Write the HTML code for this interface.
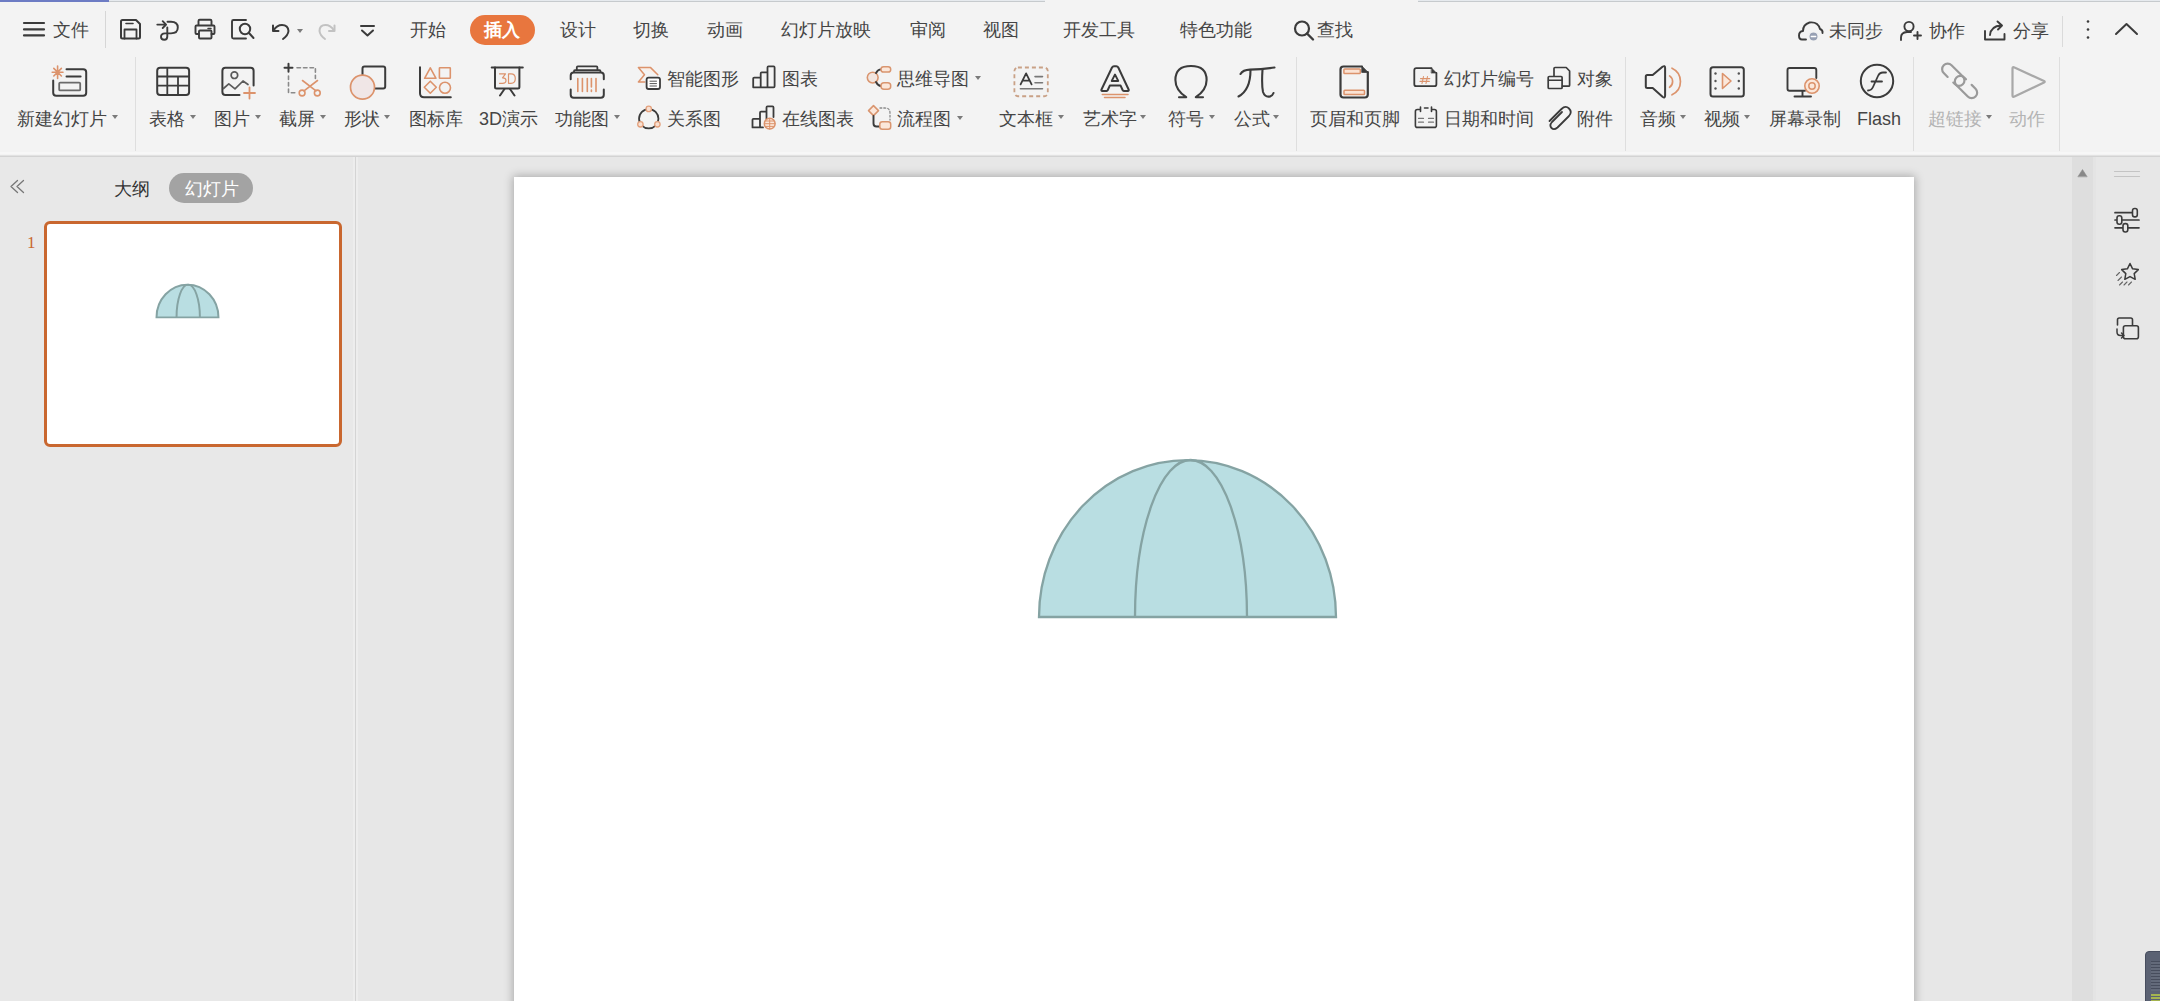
<!DOCTYPE html>
<html><head><meta charset="utf-8">
<style>
*{margin:0;padding:0;box-sizing:border-box}
html,body{width:2160px;height:1001px;overflow:hidden;background:#e7e7e7;font-family:"Liberation Sans",sans-serif;color:#3a3a3a}
.a{position:absolute}
.t{position:absolute;font-size:18px;line-height:18px;white-space:nowrap;color:#454545}
.dd{position:absolute;width:0;height:0;border-left:3.5px solid transparent;border-right:3.5px solid transparent;border-top:4px solid #7a7a7a}
</style></head><body>
<div class="a" style="left:0;top:0;width:2160px;height:155px;background:#f3f3f3"></div>
<div class="a" style="left:0;top:0;width:109px;height:2px;background:#6d7cc4"></div>
<div class="a" style="left:109px;top:0;width:936px;height:1px;background:#e6eaee"></div><div class="a" style="left:109px;top:1px;width:936px;height:1px;background:#c6cacd"></div>
<div class="a" style="left:1418px;top:0;width:742px;height:1px;background:#e6eaee"></div><div class="a" style="left:1418px;top:1px;width:742px;height:1px;background:#c6cacd"></div>
<div class="a" style="left:0;top:152px;width:2160px;height:2px;background:#f7f7f7"></div>
<div class="a" style="left:0;top:155px;width:2160px;height:1px;background:#e2e2e2"></div><div class="a" style="left:0;top:156px;width:2160px;height:1px;background:#d3d3d3"></div>
<div class="a" style="left:0;top:157px;width:355px;height:844px;background:#e8e8e8"></div>
<div class="a" style="left:353px;top:157px;width:2px;height:844px;background:#ededed"></div>
<div class="a" style="left:355px;top:157px;width:1px;height:844px;background:#d4d4d4"></div>
<div class="a" style="left:356px;top:157px;width:2px;height:844px;background:#ededed"></div>
<div class="a" style="left:2072px;top:157px;width:21px;height:844px;background:#dedede"></div>
<div class="a" style="left:2093px;top:157px;width:3px;height:844px;background:#e4e4e4"></div>
<div class="a" style="left:514px;top:177px;width:1400px;height:1050px;background:#fff;box-shadow:0 0 9px 1px rgba(0,0,0,0.28)"></div>
<div class="a" style="left:470px;top:15px;width:65px;height:30px;border-radius:15px;background:#e8763e"></div>
<div class="a" style="left:169px;top:173px;width:84px;height:30px;border-radius:15px;background:#a3a3a3"></div>
<div class="a" style="left:44px;top:221px;width:298px;height:226px;border:3px solid #c9672f;border-radius:6px;background:#fff"></div>
<div class="a" style="left:27px;top:234px;font-family:'Liberation Serif',serif;font-size:17px;line-height:17px;color:#c9672f">1</div>
<div class="a" style="left:2145px;top:951px;width:20px;height:60px;background:#5b6273;border-radius:4px 0 0 0;border:1px solid #474d5e"></div>
<div class="a" style="left:2151px;top:961px;width:9px;height:30px;background:repeating-linear-gradient(#474d5d 0 1.2px,#636a7a 1.2px 3px)"></div>
<div class="a" style="left:2151px;top:994px;width:9px;height:7px;background:repeating-linear-gradient(#a4b450 0 2px,#5b6273 2px 3px)"></div>
<svg class="a" style="left:0;top:0" width="2160" height="1001" viewBox="0 0 2160 1001">
<path d="M24,23H44M24,29.4H44M24,35.4H44" stroke="#3b3b3b" stroke-width="2.2" fill="none" stroke-linecap="round" stroke-linejoin="round" />
<line x1="105.5" y1="11" x2="105.5" y2="48" stroke="#d6d6d6" stroke-width="1"/>
<path d="M121,21.5Q121,20 122.5,20H136L140,24V37Q140,38.5 138.5,38.5H122.5Q121,38.5 121,37Z" stroke="#3b3b3b" stroke-width="2" fill="none" stroke-linecap="round" stroke-linejoin="round" />
<path d="M124.5,38.5V29.5H136.5V38.5" stroke="#3b3b3b" stroke-width="1.8" fill="none" stroke-linecap="round" stroke-linejoin="round" />
<path d="M126,23.5H133" stroke="#3b3b3b" stroke-width="1.6" fill="none" stroke-linecap="round" stroke-linejoin="round" />
<path d="M157.3,24.6H166M162.7,21.2L166.1,24.6L162.7,28" stroke="#3b3b3b" stroke-width="1.9" fill="none" stroke-linecap="round" stroke-linejoin="round" />
<path d="M167.5,21.8H171Q177.8,21.8 177.8,27.6Q177.8,33.4 171,33.4H165Q161,33.6 161,36.8Q161,39.8 164.3,39.8Q167.3,39.8 167.3,36.5V27.5" stroke="#3b3b3b" stroke-width="1.9" fill="none" stroke-linecap="round" stroke-linejoin="round" />
<path d="M198.5,25V21Q198.5,19.8 199.7,19.8H210.3Q211.5,19.8 211.5,21V25" stroke="#3b3b3b" stroke-width="1.9" fill="none" stroke-linecap="round" stroke-linejoin="round" />
<path d="M198.5,34H196.5Q195.5,34 195.5,33V26.5Q195.5,25.5 196.5,25.5H213.5Q214.5,25.5 214.5,26.5V33Q214.5,34 213.5,34H211.5" stroke="#3b3b3b" stroke-width="1.9" fill="none" stroke-linecap="round" stroke-linejoin="round" />
<rect x="199" y="30.5" width="12.5" height="8" rx="1" stroke="#3b3b3b" stroke-width="1.9" fill="none" />
<path d="M208,28.5H211" stroke="#3b3b3b" stroke-width="1.5" fill="none" stroke-linecap="round" stroke-linejoin="round" />
<path d="M246,20H233.5Q232,20 232,21.5V37Q232,38.5 233.5,38.5H246" stroke="#3b3b3b" stroke-width="1.9" fill="none" stroke-linecap="round" stroke-linejoin="round" />
<circle cx="245" cy="29" r="5.2" stroke="#3b3b3b" stroke-width="2" fill="none"/>
<path d="M249,33L253.5,38" stroke="#3b3b3b" stroke-width="2" fill="none" stroke-linecap="round" stroke-linejoin="round" />
<path d="M273,25.5V31H278.5" stroke="#3b3b3b" stroke-width="2" fill="none" stroke-linecap="round" stroke-linejoin="round" />
<path d="M273.5,30.5Q277,25 282,25Q288,25 288.5,31Q288,35.5 283,39" stroke="#3b3b3b" stroke-width="2" fill="none" stroke-linecap="round" stroke-linejoin="round" />
<path d="M334.5,25.5V31H329" stroke="#c2c2c2" stroke-width="2" fill="none" stroke-linecap="round" stroke-linejoin="round" />
<path d="M334,30.5Q330.5,25 325.5,25Q319.5,25 319.5,31Q320,35.5 325,39" stroke="#c2c2c2" stroke-width="2" fill="none" stroke-linecap="round" stroke-linejoin="round" />
<path d="M361,26H374M362,30.5L367.5,35.5L373,30.5" stroke="#3b3b3b" stroke-width="2" fill="none" stroke-linecap="round" stroke-linejoin="round" />
<circle cx="1302" cy="28.5" r="7" stroke="#3b3b3b" stroke-width="2.2" fill="none"/>
<path d="M1307,33.5L1313,39.5" stroke="#3b3b3b" stroke-width="2.4" fill="none" stroke-linecap="round" stroke-linejoin="round" />
<path d="M1806,39.5H1802Q1799,39.5 1799,35.5Q1799,31.5 1803,31Q1803,24.5 1809.5,22.5Q1818,21.5 1820,29Q1823,30 1822.5,33" stroke="#3b3b3b" stroke-width="1.9" fill="none" stroke-linecap="round" stroke-linejoin="round" />
<circle cx="1813.5" cy="36.5" r="4.6" stroke="#f3f3f3" stroke-width="1.2" fill="#97a0b3"/>
<path d="M1811.3,36.5H1815.7" stroke="#fff" stroke-width="1.4" fill="none" stroke-linecap="round" stroke-linejoin="round" />
<circle cx="1909" cy="26.5" r="4.6" stroke="#3b3b3b" stroke-width="1.9" fill="none"/>
<path d="M1901,40V37.5Q1901,32.5 1907,32H1911" stroke="#3b3b3b" stroke-width="1.9" fill="none" stroke-linecap="round" stroke-linejoin="round" />
<path d="M1917.5,32V39M1914,35.5H1921" stroke="#3b3b3b" stroke-width="1.9" fill="none" stroke-linecap="round" stroke-linejoin="round" />
<path d="M1985,31V39.5H2004.5V34" stroke="#3b3b3b" stroke-width="1.9" fill="none" stroke-linecap="round" stroke-linejoin="round" />
<path d="M1990,35Q1991,26 2001,25.5M1997.5,21.5L2002,25.5L1998,29.5" stroke="#3b3b3b" stroke-width="1.9" fill="none" stroke-linecap="round" stroke-linejoin="round" />
<line x1="2062.5" y1="16" x2="2062.5" y2="47" stroke="#dadada" stroke-width="1"/>
<circle cx="2088" cy="21.5" r="1.3" stroke="#3b3b3b" stroke-width="0" fill="#3b3b3b"/>
<circle cx="2088" cy="29.5" r="1.3" stroke="#3b3b3b" stroke-width="0" fill="#3b3b3b"/>
<circle cx="2088" cy="37.5" r="1.3" stroke="#3b3b3b" stroke-width="0" fill="#3b3b3b"/>
<path d="M2116,34L2126.5,24L2137,34" stroke="#3b3b3b" stroke-width="2" fill="none" stroke-linecap="round" stroke-linejoin="round" />
<line x1="135.5" y1="57" x2="135.5" y2="151" stroke="#dedede" stroke-width="1"/>
<line x1="1296.5" y1="57" x2="1296.5" y2="151" stroke="#dedede" stroke-width="1"/>
<line x1="1625.5" y1="57" x2="1625.5" y2="151" stroke="#dedede" stroke-width="1"/>
<line x1="1913.5" y1="57" x2="1913.5" y2="151" stroke="#dedede" stroke-width="1"/>
<line x1="2059.5" y1="57" x2="2059.5" y2="151" stroke="#dedede" stroke-width="1"/>
<path d="M66.5,69.2H83.2Q86.2,69.2 86.2,72.2V92.8Q86.2,95.8 83.2,95.8H56.2Q53.2,95.8 53.2,92.8V80.5" stroke="#3b3b3b" stroke-width="2" fill="none" stroke-linecap="round" stroke-linejoin="round" />
<path d="M66.5,76.6H80.6" stroke="#3b3b3b" stroke-width="2" fill="none" stroke-linecap="round" stroke-linejoin="round" />
<rect x="59.2" y="82.6" width="21" height="7.8" rx="1" stroke="#6a6a6a" stroke-width="1.8" fill="none" />
<path d="M57.6,66V78.4M52.2,72.2H63M53.8,68.4L61.4,76M61.4,68.4L53.8,76" stroke="#dc936c" stroke-width="1.6" fill="none" stroke-linecap="round" stroke-linejoin="round" />
<rect x="157.2" y="67.7" width="31.9" height="27.2" rx="3" stroke="#3b3b3b" stroke-width="2" fill="none" />
<path d="M158,76.5H188.5M158,85.6H188.5M167.3,68.5V94.5M178,76.5V94.5" stroke="#3b3b3b" stroke-width="1.8" fill="none" stroke-linecap="round" stroke-linejoin="round" />
<path d="M239.5,94.9H225.4Q222.4,94.9 222.4,91.9V70.7Q222.4,67.7 225.4,67.7H250.6Q253.6,67.7 253.6,70.7V85.6" stroke="#3b3b3b" stroke-width="2" fill="none" stroke-linecap="round" stroke-linejoin="round" />
<circle cx="234.4" cy="75.2" r="3.3" stroke="#5a5a5a" stroke-width="1.7" fill="none"/>
<path d="M223.5,88.5L228.8,83.8L235,88.8L243,81L248,84.5" stroke="#5a5a5a" stroke-width="1.7" fill="none" stroke-linecap="round" stroke-linejoin="round" />
<path d="M249.5,87.5V98.5M244,93H255" stroke="#dc936c" stroke-width="1.8" fill="none" stroke-linecap="round" stroke-linejoin="round" />
<path d="M288.5,63.7V71.7M284.5,67.7H292.5" stroke="#3b3b3b" stroke-width="2" fill="none" stroke-linecap="round" stroke-linejoin="round" />
<path d="M297,67.7H315.4V78.5M288.5,76V92.7H297" stroke="#8a8a8a" stroke-width="1.6" fill="none" stroke-linecap="round" stroke-linejoin="round" stroke-dasharray="3.5,3"/>
<path d="M302.5,80.5L316,90.8M317.5,80.5L304,90.8" stroke="#dc936c" stroke-width="1.6" fill="none" stroke-linecap="round" stroke-linejoin="round" />
<circle cx="302.1" cy="93" r="2.9" stroke="#dc936c" stroke-width="1.6" fill="none"/>
<circle cx="317.3" cy="93" r="2.9" stroke="#dc936c" stroke-width="1.6" fill="none"/>
<path d="M362.5,75V68.4Q362.5,66.4 364.5,66.4H383.2Q385.2,66.4 385.2,68.4V86.5Q385.2,88.5 383.2,88.5H374.5" stroke="#3b3b3b" stroke-width="2" fill="none" stroke-linecap="round" stroke-linejoin="round" />
<circle cx="362.5" cy="87.2" r="12" stroke="#dc936c" stroke-width="1.7" fill="#f0e6e6"/>
<path d="M420,67.2V93.2Q420,97.2 424,97.2H450.8" stroke="#3b3b3b" stroke-width="2" fill="none" stroke-linecap="round" stroke-linejoin="round" />
<path d="M430.3,67.8L424.6,78.3H436Z" stroke="#dc936c" stroke-width="1.6" fill="none" stroke-linecap="round" stroke-linejoin="round" />
<rect x="439.4" y="67.7" width="10.9" height="10.6" rx="0.5" stroke="#dc936c" stroke-width="1.6" fill="none" />
<path d="M430.3,81.2L436.3,87.2L430.3,93.2L424.3,87.2Z" stroke="#dc936c" stroke-width="1.6" fill="none" stroke-linecap="round" stroke-linejoin="round" />
<circle cx="445" cy="87.8" r="5.5" stroke="#dc936c" stroke-width="1.6" fill="none"/>
<path d="M491.7,67.5H522.8" stroke="#3b3b3b" stroke-width="2" fill="none" stroke-linecap="round" stroke-linejoin="round" />
<path d="M495,67.5V87.1Q495,88.6 496.5,88.6H517.9Q519.4,88.6 519.4,87.1V67.5" stroke="#3b3b3b" stroke-width="2" fill="none" stroke-linecap="round" stroke-linejoin="round" />
<path d="M504.5,89L500,95.5M510,89L514.5,95.5" stroke="#3b3b3b" stroke-width="2" fill="none" stroke-linecap="round" stroke-linejoin="round" />
<path d="M499.5,73.8H505.5L502.5,77.8Q506,77.8 506,80.5Q506,83.3 502.5,83.3H499.5M508.5,73.8H511Q515.3,73.8 515.3,78.5Q515.3,83.3 511,83.3H508.5Z" stroke="#dc936c" stroke-width="1.2" fill="none" stroke-linecap="round" stroke-linejoin="round" />
<path d="M570.7,79.3V75.5Q570.7,72.5 573.7,72.5H600.8Q603.8,72.5 603.8,75.5V79.3M570.7,89.5V94.7Q570.7,97.7 573.7,97.7H600.8Q603.8,97.7 603.8,94.7V89.5" stroke="#3b3b3b" stroke-width="2" fill="none" stroke-linecap="round" stroke-linejoin="round" />
<path d="M574,72V71.2Q574,70.2 575,70.2H599.5Q600.5,70.2 600.5,71.2V72" stroke="#3b3b3b" stroke-width="1.8" fill="none" stroke-linecap="round" stroke-linejoin="round" />
<path d="M576.8,69.5V67.4Q576.8,66.4 577.8,66.4H596.4Q597.4,66.4 597.4,67.4V69.5" stroke="#3b3b3b" stroke-width="1.8" fill="none" stroke-linecap="round" stroke-linejoin="round" />
<path d="M577.8,78.5V91.5M582.4,78.5V91.5M587.3,78.5V91.5M591.4,78.5V87M591.4,90V91.5M596,78.5V91.5" stroke="#dc936c" stroke-width="1.6" fill="none" stroke-linecap="round" stroke-linejoin="round" />
<path d="M638.4,67.6H650.6L657.8,74.8M644.8,82.1H638.4L644.5,74.8L638.4,67.6" stroke="#dc936c" stroke-width="1.5" fill="#fbeee6" stroke-linecap="round" stroke-linejoin="round" />
<rect x="646.6" y="77.6" width="13.4" height="11.4" rx="2" stroke="#3b3b3b" stroke-width="1.8" fill="#fff" />
<path d="M650,81.2H656.5M650,83.6H656.5M650,86H656.5" stroke="#555" stroke-width="1" fill="none" stroke-linecap="round" stroke-linejoin="round" />
<path d="M753.2,87.3V78.6Q753.2,77.6 754.2,77.6H760.7V87.3ZM760.7,87.3V73.4Q760.7,72.4 761.7,72.4H767.5V87.3M767.5,87.3V67.4Q767.5,66.4 768.5,66.4H773.6Q774.6,66.4 774.6,67.4V86.3Q774.6,87.3 773.6,87.3H754.2" stroke="#3b3b3b" stroke-width="1.8" fill="none" stroke-linecap="round" stroke-linejoin="round" />
<circle cx="648.75" cy="118.75" r="9.7" stroke="#3b3b3b" stroke-width="1.8" fill="none"/>
<circle cx="648.75" cy="108.9" r="2.7" stroke="#e3a07c" stroke-width="1.3" fill="#f8e0d2"/>
<circle cx="640.4" cy="124.3" r="2.7" stroke="#e3a07c" stroke-width="1.3" fill="#f8e0d2"/>
<circle cx="657.4" cy="124.3" r="2.7" stroke="#e3a07c" stroke-width="1.3" fill="#f8e0d2"/>
<path d="M752.5,127.4V119.8Q752.5,118.8 753.5,118.8H760V127.4ZM760,127.4V112.7Q760,111.7 761,111.7H766.5V119M766.5,119V107.4Q766.5,106.4 767.5,106.4H772.5Q773.5,106.4 773.5,107.4V117M763,127.4H753.5" stroke="#3b3b3b" stroke-width="1.8" fill="none" stroke-linecap="round" stroke-linejoin="round" />
<circle cx="769.7" cy="123.7" r="5.4" stroke="#dc936c" stroke-width="1.5" fill="#fbe7da"/>
<path d="M764.5,123.7H775M769.7,118.5V129M766,121H773.5M766,126.4H773.5" stroke="#dc936c" stroke-width="1" fill="none" stroke-linecap="round" stroke-linejoin="round" />
<circle cx="872.7" cy="77.6" r="5.4" stroke="#d9956f" stroke-width="1.6" fill="#f2e6e0"/>
<path d="M876,73Q878,69.5 881,69.4M876,82Q878,85.8 881,86" stroke="#3b3b3b" stroke-width="1.9" fill="none" stroke-linecap="round" stroke-linejoin="round" />
<rect x="881" y="66.7" width="9.7" height="5.4" rx="2.6" stroke="#d9956f" stroke-width="1.5" fill="#fbe7da" />
<rect x="881" y="82.8" width="9.7" height="6.4" rx="3" stroke="#d9956f" stroke-width="1.5" fill="#fbe7da" />
<path d="M873.5,105.6L878.5,110.6L873.5,115.6L868.5,110.6Z" stroke="#d9956f" stroke-width="1.5" fill="#fbe7da" stroke-linecap="round" stroke-linejoin="round" />
<path d="M873.5,116V123.5Q873.5,126.5 876.5,126.5H879.8" stroke="#3b3b3b" stroke-width="1.9" fill="none" stroke-linecap="round" stroke-linejoin="round" />
<path d="M880,108H885Q890,108 890,113V120" stroke="#8a8a8a" stroke-width="1.3" fill="none" stroke-linecap="round" stroke-linejoin="round" stroke-dasharray="1.8,2"/>
<rect x="879.8" y="121.8" width="10.9" height="7.5" rx="2.5" stroke="#d9956f" stroke-width="1.5" fill="#fbe7da" />
<rect x="1014.4" y="67.5" width="33.4" height="28.75" rx="3.5" stroke="#c9a186" stroke-width="1.8" fill="none" stroke-dasharray="4,3"/>
<path d="M1020.6,84.4L1026.1,73.4L1031.6,84.4M1022.5,80.6H1029.7" stroke="#3b3b3b" stroke-width="1.8" fill="none" stroke-linecap="round" stroke-linejoin="round" />
<path d="M1035,76.6H1042.5M1035,82.8H1042.5M1020.4,88.75H1042.5" stroke="#777" stroke-width="1.6" fill="none" stroke-linecap="round" stroke-linejoin="round" />
<path d="M1101.5,89.5L1112,67.5Q1112.7,66.2 1114,66.2H1116.3Q1117.6,66.2 1118.3,67.5L1128.6,89.5Q1129.2,90.9 1127.8,90.9H1123.8Q1123,90.9 1122.6,90L1120.6,85.6H1109.8L1107.8,90Q1107.4,90.9 1106.6,90.9H1102.3Q1100.9,90.9 1101.5,89.5Z" stroke="#3b3b3b" stroke-width="2" fill="none" stroke-linecap="round" stroke-linejoin="round" />
<path d="M1111.7,81L1115,74.5L1118.3,81Z" stroke="#3b3b3b" stroke-width="1.8" fill="none" stroke-linecap="round" stroke-linejoin="round" />
<path d="M1102.3,94.6H1128M1104.5,97.6H1125" stroke="#dc936c" stroke-width="1.5" fill="none" stroke-linecap="round" stroke-linejoin="round" />
<path d="M1179,97.2H1186.2Q1175.4,90 1175.4,80Q1175.4,66 1191,66Q1206.6,66 1206.6,80Q1206.6,90 1195.8,97.2H1203" stroke="#3b3b3b" stroke-width="2.1" fill="none" stroke-linecap="round" stroke-linejoin="round" />
<path d="M1240.5,74Q1243,69.8 1250,69.6Q1262,69.2 1274.5,67.5" stroke="#3b3b3b" stroke-width="2.1" fill="none" stroke-linecap="round" stroke-linejoin="round" />
<path d="M1250.5,70Q1250.5,90 1238.5,96.5" stroke="#3b3b3b" stroke-width="2.1" fill="none" stroke-linecap="round" stroke-linejoin="round" />
<path d="M1262.5,69.6Q1261.5,85 1263,92Q1265,97.5 1270,96.5Q1272.5,95.8 1273.5,93" stroke="#3b3b3b" stroke-width="2.1" fill="none" stroke-linecap="round" stroke-linejoin="round" />
<path d="M1362,66.5H1343.5Q1340.5,66.5 1340.5,69.5V94.5Q1340.5,97.5 1343.5,97.5H1364.8Q1367.8,97.5 1367.8,94.5V72.2" stroke="#3b3b3b" stroke-width="2.2" fill="none" stroke-linecap="round" stroke-linejoin="round" />
<path d="M1362,66.2L1368.2,72.4H1362Z" stroke="#3b3b3b" stroke-width="0.8" fill="#3b3b3b" stroke-linecap="round" stroke-linejoin="round" />
<rect x="1343.9" y="69" width="16.4" height="4.5" rx="0.8" stroke="#dc936c" stroke-width="1.5" fill="#fbe3d4" />
<rect x="1344" y="90.3" width="20.5" height="4.2" rx="0.8" stroke="#dc936c" stroke-width="1.5" fill="#fbe3d4" />
<path d="M1431.5,68.2H1416.3Q1414.3,68.2 1414.3,70.2V84.2Q1414.3,86.2 1416.3,86.2H1434.4Q1436.4,86.2 1436.4,84.2V73" stroke="#3b3b3b" stroke-width="1.8" fill="none" stroke-linecap="round" stroke-linejoin="round" />
<path d="M1431.5,68L1436.6,73.1H1431.5Z" stroke="#3b3b3b" stroke-width="0.6" fill="#3b3b3b" stroke-linecap="round" stroke-linejoin="round" />
<path d="M1423.5,76.5L1422,83.5M1427.5,76.5L1426,83.5M1420.5,78.6H1429.8M1420,81.4H1429.3" stroke="#dc936c" stroke-width="1.1" fill="none" stroke-linecap="round" stroke-linejoin="round" />
<path d="M1420,109.5H1417.4Q1415.4,109.5 1415.4,111.5V125.4Q1415.4,127.4 1417.4,127.4H1434.4Q1436.4,127.4 1436.4,125.4V111.5Q1436.4,109.5 1434.4,109.5H1432M1424.5,108H1428" stroke="#3b3b3b" stroke-width="1.6" fill="none" stroke-linecap="round" stroke-linejoin="round" />
<path d="M1420.5,107V111.5M1431.5,107V111.5" stroke="#3b3b3b" stroke-width="1.6" fill="none" stroke-linecap="round" stroke-linejoin="round" />
<path d="M1418.5,118.4H1423.5M1428.5,118.4H1433.5M1418.5,122.2H1423.5M1428.5,122.2H1433.5" stroke="#777" stroke-width="1.2" fill="none" stroke-linecap="round" stroke-linejoin="round" />
<path d="M1554,76V68.5Q1554,67.5 1555,67.5H1566.2L1569.6,71V85.2Q1569.6,86.2 1568.6,86.2H1562.5" stroke="#3b3b3b" stroke-width="1.7" fill="none" stroke-linecap="round" stroke-linejoin="round" />
<rect x="1548.2" y="76.5" width="13.9" height="12" rx="1" stroke="#3b3b3b" stroke-width="1.7" fill="none" />
<path d="M1548.5,80.2H1562" stroke="#3b3b3b" stroke-width="1.4" fill="none" stroke-linecap="round" stroke-linejoin="round" />
<path d="M1562,112L1552,122Q1549,125.5 1551.5,128Q1554,130.5 1557.5,127.5L1569,116Q1572.5,112 1569,108.5Q1565.5,105 1561.5,109L1549.5,121" stroke="#3b3b3b" stroke-width="1.8" fill="none" stroke-linecap="round" stroke-linejoin="round" />
<path d="M1645.8,76.5Q1645.8,75 1647.3,75H1652.7L1662.5,66.8Q1665.1,65 1665.1,68V95.6Q1665.1,98.6 1662.5,96.8L1652.7,88.1H1647.3Q1645.8,88.1 1645.8,86.6Z" stroke="#3b3b3b" stroke-width="2" fill="none" stroke-linecap="round" stroke-linejoin="round" />
<path d="M1669.6,75.9A6.9,6.9 0 0 1 1669.6,87.3M1672,68.2A14.7,14.7 0 0 1 1672,94.8" stroke="#dc936c" stroke-width="1.7" fill="none" stroke-linecap="round" stroke-linejoin="round" />
<rect x="1710.5" y="67.3" width="33.3" height="29.2" rx="2.5" stroke="#3b3b3b" stroke-width="2" fill="none" />
<circle cx="1715.5" cy="73.5" r="1.2" stroke="#3b3b3b" stroke-width="0" fill="#555"/>
<circle cx="1738.8" cy="73.5" r="1.2" stroke="#3b3b3b" stroke-width="0" fill="#555"/>
<circle cx="1715.5" cy="81" r="1.2" stroke="#3b3b3b" stroke-width="0" fill="#555"/>
<circle cx="1738.8" cy="81" r="1.2" stroke="#3b3b3b" stroke-width="0" fill="#555"/>
<circle cx="1715.5" cy="88.5" r="1.2" stroke="#3b3b3b" stroke-width="0" fill="#555"/>
<circle cx="1738.8" cy="88.5" r="1.2" stroke="#3b3b3b" stroke-width="0" fill="#555"/>
<path d="M1722.5,73.5L1731,81L1722.5,88.5Z" stroke="#dc936c" stroke-width="1.6" fill="#fbe7da" stroke-linecap="round" stroke-linejoin="round" />
<path d="M1805,90.8H1789.5Q1787.5,90.8 1787.5,88.8V70Q1787.5,68 1789.5,68H1814.3Q1816.3,68 1816.3,70V78" stroke="#3b3b3b" stroke-width="1.9" fill="none" stroke-linecap="round" stroke-linejoin="round" />
<path d="M1802.5,91V96.2M1794.5,96.5H1811" stroke="#3b3b3b" stroke-width="1.9" fill="none" stroke-linecap="round" stroke-linejoin="round" />
<circle cx="1812" cy="86" r="7.2" stroke="#dc936c" stroke-width="1.6" fill="#fbe7da"/>
<circle cx="1812" cy="86" r="3.2" stroke="#dc936c" stroke-width="1.5" fill="none"/>
<circle cx="1877" cy="81" r="16.2" stroke="#3b3b3b" stroke-width="2" fill="none"/>
<path d="M1868,90.5Q1871.5,90.5 1873,87L1878,76Q1879.5,72.5 1883,72.5H1886M1871.5,81.5H1882" stroke="#3b3b3b" stroke-width="1.8" fill="none" stroke-linecap="round" stroke-linejoin="round" />
<g transform="translate(1953.3,74.8) rotate(45)"><path d="M-2.5,5.5H-8A5.5,5.5 0 0 1 -8,-5.5H8A5.5,5.5 0 0 1 8,5.5H5.5" stroke="#9a9a9a" stroke-width="2.2" fill="none" stroke-linecap="round"/></g>
<g transform="translate(1966,87) rotate(45)"><path d="M2.5,-5.5H8A5.5,5.5 0 0 1 8,5.5H-8A5.5,5.5 0 0 1 -8,-5.5H-5.5" stroke="#9a9a9a" stroke-width="2.2" fill="none" stroke-linecap="round"/></g>
<path d="M2014.5,67.5L2044,81Q2045.5,81.8 2044,82.6L2014.5,96.5Q2012.5,97.5 2012.5,95.5V68.5Q2012.5,66.5 2014.5,67.5Z" stroke="#a8a8a8" stroke-width="2.2" fill="none" stroke-linecap="round" stroke-linejoin="round" />
<path d="M17.5,180.5L11,186.5L17.5,192.5M23.5,180.5L17,186.5L23.5,192.5" stroke="#777" stroke-width="1.3" fill="none" stroke-linecap="round" stroke-linejoin="round" />
<path d="M2078,176.5L2082.5,169.5L2087,176.5Z" stroke="#888" stroke-width="0.5" fill="#888" stroke-linecap="round" stroke-linejoin="round" />
<path d="M2114.5,171.5H2139.5M2114.5,176.5H2139.5" stroke="#c4c4c4" stroke-width="1.2" fill="none" stroke-linecap="round" stroke-linejoin="round" />
<path d="M2115,212.7H2134M2115,220H2139M2115,227.8H2139" stroke="#3b3b3b" stroke-width="1.7" fill="none" stroke-linecap="round" stroke-linejoin="round" />
<rect x="2132.5" y="208.5" width="4.8" height="8.4" rx="2.2" stroke="#3b3b3b" stroke-width="1.6" fill="#e8e8e8" />
<rect x="2117" y="215.8" width="4.8" height="8.4" rx="2.2" stroke="#3b3b3b" stroke-width="1.6" fill="#e8e8e8" />
<rect x="2123" y="223.6" width="4.8" height="8.4" rx="2.2" stroke="#3b3b3b" stroke-width="1.6" fill="#e8e8e8" />
<path d="M2130,263.5L2132.6,268.8L2138.3,269.6L2134.2,273.6L2135.2,279.3L2130,276.6L2124.8,279.3L2125.8,273.6L2121.7,269.6L2127.4,268.8Z" stroke="#3b3b3b" stroke-width="1.5" fill="none" stroke-linecap="round" stroke-linejoin="round" />
<path d="M2116.5,275.5L2119.5,272.5M2118,280.5L2121.5,277M2119.5,285L2122.5,282M2124,285L2127,282M2128.5,285L2131.5,282" stroke="#666" stroke-width="1.1" fill="none" stroke-linecap="round" stroke-linejoin="round" />
<path d="M2117.5,325V319.8Q2117.5,318 2119.3,318H2130.7Q2132.5,318 2132.5,319.8V325.7" stroke="#3b3b3b" stroke-width="1.6" fill="none" stroke-linecap="round" stroke-linejoin="round" />
<rect x="2123.4" y="325.7" width="15" height="13" rx="2" stroke="#3b3b3b" stroke-width="1.6" fill="#e8e8e8" />
<path d="M2117,329V332Q2117,335.5 2120.5,335.5H2124M2121.5,333L2124,335.5L2121.5,338" stroke="#3b3b3b" stroke-width="1.5" fill="none" stroke-linecap="round" stroke-linejoin="round" />
<path d="M1039,617A148.5,157 0 0 1 1336,617Z" fill="#b9dee2" stroke="#85a3a3" stroke-width="2.3" stroke-linejoin="miter"/>
<path d="M1135,617A55.5,157 0 0 1 1190.5,460" fill="none" stroke="#85a3a3" stroke-width="2.3"/>
<path d="M1247,617A56.5,157 0 0 0 1190.5,460" fill="none" stroke="#85a3a3" stroke-width="2.3"/>
<g transform="translate(47,225.6) scale(0.2086) translate(-514,-177)"><path d="M1039,617A148.5,157 0 0 1 1336,617Z" fill="#b9dee2" stroke="#85a3a3" stroke-width="9.5" stroke-linejoin="miter"/>
<path d="M1135,617A55.5,157 0 0 1 1190.5,460" fill="none" stroke="#85a3a3" stroke-width="9.5"/>
<path d="M1247,617A56.5,157 0 0 0 1190.5,460" fill="none" stroke="#85a3a3" stroke-width="9.5"/></g>
</svg>
<div class="t" style="left:53px;top:21px;">文件</div>
<div class="t" style="left:410px;top:21px;">开始</div>
<div class="t" style="left:560px;top:21px;">设计</div>
<div class="t" style="left:633px;top:21px;">切换</div>
<div class="t" style="left:707px;top:21px;">动画</div>
<div class="t" style="left:781px;top:21px;">幻灯片放映</div>
<div class="t" style="left:910px;top:21px;">审阅</div>
<div class="t" style="left:983px;top:21px;">视图</div>
<div class="t" style="left:1063px;top:21px;">开发工具</div>
<div class="t" style="left:1180px;top:21px;">特色功能</div>
<div class="t" style="left:1317px;top:21px;">查找</div>
<div class="t" style="left:484px;top:21px;color:#fff;font-weight:bold;">插入</div>
<div class="t" style="left:1829px;top:22px;">未同步</div>
<div class="t" style="left:1929px;top:22px;">协作</div>
<div class="t" style="left:2013px;top:22px;">分享</div>
<div class="t" style="left:17px;top:110px;">新建幻灯片</div>
<div class="t" style="left:149px;top:110px;">表格</div>
<div class="t" style="left:214px;top:110px;">图片</div>
<div class="t" style="left:279px;top:110px;">截屏</div>
<div class="t" style="left:344px;top:110px;">形状</div>
<div class="t" style="left:409px;top:110px;">图标库</div>
<div class="t" style="left:999px;top:110px;">文本框</div>
<div class="t" style="left:1083px;top:110px;">艺术字</div>
<div class="t" style="left:1168px;top:110px;">符号</div>
<div class="t" style="left:1234px;top:110px;">公式</div>
<div class="t" style="left:1310px;top:110px;">页眉和页脚</div>
<div class="t" style="left:1640px;top:110px;">音频</div>
<div class="t" style="left:1704px;top:110px;">视频</div>
<div class="t" style="left:1769px;top:110px;">屏幕录制</div>
<div class="t" style="left:555px;top:110px;">功能图</div>
<div class="t" style="left:479px;top:110px;">3D演示</div>
<div class="t" style="left:1857px;top:110px;">Flash</div>
<div class="t" style="left:1928px;top:110px;color:#b4b4b4;">超链接</div>
<div class="t" style="left:2009px;top:110px;color:#b4b4b4;">动作</div>
<div class="t" style="left:667px;top:70px;">智能图形</div>
<div class="t" style="left:782px;top:70px;">图表</div>
<div class="t" style="left:897px;top:70px;">思维导图</div>
<div class="t" style="left:1444px;top:70px;">幻灯片编号</div>
<div class="t" style="left:1577px;top:70px;">对象</div>
<div class="t" style="left:667px;top:110px;">关系图</div>
<div class="t" style="left:782px;top:110px;">在线图表</div>
<div class="t" style="left:897px;top:110px;">流程图</div>
<div class="t" style="left:1444px;top:110px;">日期和时间</div>
<div class="t" style="left:1577px;top:110px;">附件</div>
<div class="t" style="left:114px;top:180px;color:#333;">大纲</div>
<div class="t" style="left:185px;top:180px;color:#fff;">幻灯片</div>
<div class="dd" style="left:112px;top:115px"></div><div class="dd" style="left:190px;top:115px"></div><div class="dd" style="left:255px;top:115px"></div><div class="dd" style="left:320px;top:115px"></div><div class="dd" style="left:384px;top:115px"></div><div class="dd" style="left:614px;top:115px"></div><div class="dd" style="left:975px;top:76px"></div><div class="dd" style="left:957px;top:116px"></div><div class="dd" style="left:1058px;top:115px"></div><div class="dd" style="left:1140px;top:115px"></div><div class="dd" style="left:1209px;top:115px"></div><div class="dd" style="left:1273px;top:115px"></div><div class="dd" style="left:1680px;top:115px"></div><div class="dd" style="left:1744px;top:115px"></div><div class="dd" style="left:1986px;top:115px"></div><div class="dd" style="left:297px;top:29px"></div>
</body></html>
